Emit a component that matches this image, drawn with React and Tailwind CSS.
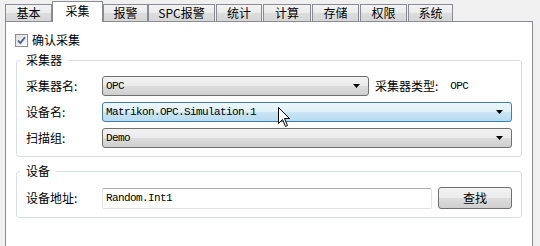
import React from "react";

const tabs = [
  { label: "基本", w: "w-[47px]" },
  { label: "采集", w: "w-[51px]", active: true },
  { label: "报警", w: "w-[45px]" },
  { label: "SPC报警", w: "w-[67px]" },
  { label: "统计", w: "w-[46px]", ml: "ml-[1px]" },
  { label: "计算", w: "w-[48px]", ml: "ml-[1px]" },
  { label: "存储", w: "w-[47px]", ml: "ml-[1px]" },
  { label: "权限", w: "w-[47px]", ml: "ml-[1px]" },
  { label: "系统", w: "w-[45px]", ml: "ml-[1px]" },
];

const mono = "font-['Liberation_Mono',monospace] text-[11px] tracking-[-0.6px]";

const Arrow = () => (
  <svg width="7" height="4" viewBox="0 0 7 4" className="shrink-0">
    <path d="M0 0h7L3.5 4z" fill="#000" />
  </svg>
);

const Combo = ({ value, width, hover }) => (
  <div
    className={`${width} h-[20px] flex items-center justify-between pl-[3px] pr-[8px] rounded-[3px] border ${
      hover
        ? "border-[#3c7fb1] bg-[linear-gradient(#ecf6fc,#e1f0f9_50%,#cae5f5_50%,#b9dbef)]"
        : "border-[#707070] bg-[linear-gradient(#f2f2f2,#ebebeb_50%,#dddddd_50%,#cfcfcf)]"
    }`}
  >
    <span className={mono}>{value}</span>
    <Arrow />
  </div>
);

const Row = ({ label, children }) => (
  <div className="flex items-center h-[20px]">
    <span className="w-[76px] shrink-0">{label}</span>
    {children}
  </div>
);

export default function App() {
  return (
    <div className="relative w-[540px] h-[246px] overflow-hidden bg-[#f0f0f0] text-[12px] leading-[14px] text-black font-['Noto_Sans_CJK_SC',sans-serif]">
      {/* TABS */}
      <div className="flex items-end h-[21px] pl-[5px]">
        {tabs.map((t) =>
          t.active ? (
            <div
              key={t.label}
              className={`${t.w} relative z-10 -mb-px h-[21px] flex items-center justify-center pb-[2px] border border-b-0 border-[#898c95] bg-white`}
            >
              {t.label}
            </div>
          ) : (
            <div
              key={t.label}
              className={`${t.w} ${t.ml || ""} h-[17px] flex items-center justify-center border border-b-0 border-[#898c95] bg-[linear-gradient(#f3f3f3,#ebebeb_50%,#dddddd_50%,#d6d6d6)]`}
            >
              {t.label}
            </div>
          ),
        )}
      </div>

      {/* PANEL */}
      <div className="ml-[5px] w-[528px] h-[225px] border border-b-0 border-[#898c95] bg-white pt-[10px]">
        {/* CHECKBOX */}
        <div className="flex items-center h-[16px] pl-[9px] gap-[4px]">
          <div className="w-[13px] h-[13px] border border-[#8e8f8f] bg-[linear-gradient(135deg,#dcdcdc,#fefefe)] flex items-center justify-center">
            <svg width="9" height="9" viewBox="0 0 9 9">
              <path d="M1 4.5l2.3 2.5L8 1.2" stroke="#4a5f97" strokeWidth="1.8" fill="none" />
            </svg>
          </div>
          <span>确认采集</span>
        </div>

        {/* 采集器 */}
        <fieldset className="mt-[5px] ml-[10px] w-[506px] border border-[#d5dfe5] rounded-[3px] pl-[9px] pr-[8px] pt-[9px] pb-[8px]">
          <legend className="-ml-[6px] px-[6px] leading-[14px]">采集器</legend>
          <div className="flex flex-col gap-[6px]">
            <Row label="采集器名:">
              <Combo value="OPC" width="w-[267px]" />
              <span className="ml-[6px]">采集器类型:</span>
              <span className={`ml-[12px] ${mono}`}>OPC</span>
            </Row>
            <Row label="设备名:">
              <Combo value="Matrikon.OPC.Simulation.1" width="w-[410px]" hover />
            </Row>
            <Row label="扫描组:">
              <Combo value="Demo" width="w-[410px]" />
            </Row>
          </div>
        </fieldset>

        {/* 设备 */}
        <fieldset className="mt-[7px] ml-[10px] w-[506px] border border-[#d5dfe5] rounded-[3px] pl-[9px] pr-[8px] pt-[9px] pb-[8px]">
          <legend className="-ml-[6px] px-[6px] leading-[14px]">设备</legend>
          <div className="flex items-center h-[22px]">
            <span className="w-[76px] shrink-0">设备地址:</span>
            <div className="w-[330px] h-[21px] flex items-center pl-[3px] rounded-[2px] border border-[#e2e3ea] border-t-[#abadb3] bg-white">
              <span className={mono}>Random.Int1</span>
            </div>
            <button className="ml-[6px] w-[74px] h-[22px] rounded-[3px] border border-[#707070] bg-[linear-gradient(#f2f2f2,#ebebeb_50%,#dddddd_50%,#cfcfcf)] text-[12px] leading-[14px]">
              查找
            </button>
          </div>
        </fieldset>
      </div>

      {/* MOUSE CURSOR */}
      <svg
        className="absolute left-[278px] top-[107px] pointer-events-none"
        width="13"
        height="21"
        viewBox="0 0 13 21"
      >
        <path
          d="M0.5 0.5V16.5L4.5 12.5L7.5 19.5L9.5 18.5L6.5 11.5H11.5Z"
          fill="#fff"
          stroke="#000"
          strokeWidth="1"
          strokeLinejoin="miter"
        />
      </svg>
    </div>
  );
}
